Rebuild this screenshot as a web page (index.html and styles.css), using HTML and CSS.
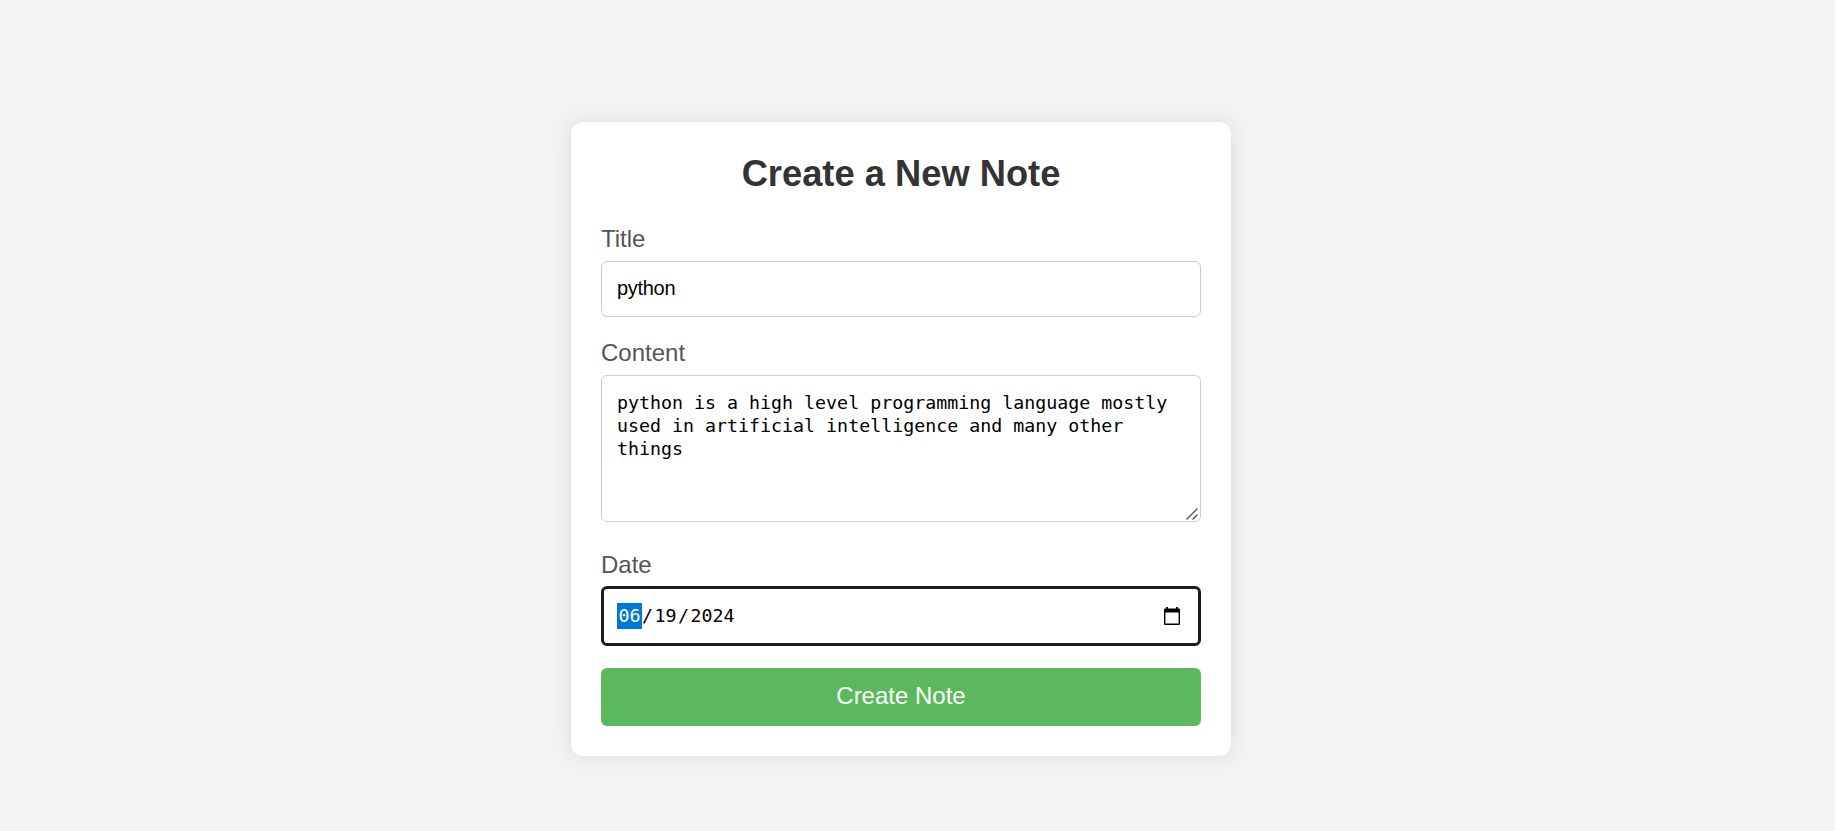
FILE: index.html
```html
<!DOCTYPE html>
<html lang="en">
<head>
<meta charset="utf-8">
<title>Create a New Note</title>
<link rel="stylesheet" href="styles.css">
</head>
<body>
<main class="page">
  <form class="card">
    <h1 class="heading">Create a New Note</h1>
    <label class="label" for="title">Title</label>
    <input class="field" id="title" type="text" value="python">
    <label class="label" for="content">Content</label>
    <div class="area">
      <textarea class="field field-area" id="content" spellcheck="false">python is a high level programming language mostly used in artificial intelligence and many other things</textarea>
      <svg class="grip" width="12" height="12" viewBox="0 0 12 12"><path d="M.5 11.5 11.5.5M6.5 11.5l5-5"/></svg>
    </div>
    <span class="label">Date</span>
    <div class="field date" tabindex="0">
      <span class="part selected">06</span><span>/</span><span class="part">19</span><span>/</span><span class="part">2024</span>
      <svg class="calendar" width="16" height="18" viewBox="0 0 16 18"><path d="M2 0h2v1.5h8V0h2v1.5h1a1 1 0 0 1 1 1V17a1 1 0 0 1-1 1H1a1 1 0 0 1-1-1V2.500a1 1 0 0 1 1-1h1zM1.400 5.500v11.100h13.200V5.500z" fill-rule="evenodd"/></svg>
    </div>
    <button class="button" type="button">Create Note</button>
  </form>
</main>
</body>
</html>
```
FILE: styles.css
```css
* {
  box-sizing: border-box;
}

body {
  margin: 0;
  background: #fff;
  font-family: "Liberation Sans", Arial, sans-serif;
}

.page {
  width: 1835px;
  height: 831px;
  padding: 122px 33px 0 0;
  display: flex;
  justify-content: center;
  align-items: flex-start;
  background: #f3f3f3;
}

.card {
  width: 660px;
  height: 634px;
  padding: 30px;
  display: flex;
  flex-direction: column;
  border-radius: 12px;
  background: #fff;
  box-shadow: 0 0 19px rgba(0, 0, 0, 0.1);
}

.heading {
  margin: 0 0 24px;
  font-size: 36.3px;
  line-height: 43px;
  text-align: center;
  color: #333;
}

.label {
  margin-bottom: 5px;
  padding-top: 3px;
  font-size: 24px;
  line-height: 34px;
  color: #555;
}

.field {
  width: 100%;
  height: 56px;
  margin: 0 0 16px;
  padding: 0 15px 1px;
  border: 1px solid #ccc;
  border-radius: 6px;
  outline: none;
  background: #fff;
  color: #000;
  font: 20px "Liberation Sans", Arial, sans-serif;
  letter-spacing: -0.3px;
}

.area {
  position: relative;
  height: 147px;
  margin-bottom: 23px;
}

.field-area {
  display: block;
  height: 147px;
  padding: 15px;
  resize: none;
  overflow: hidden;
  font: 18.3px/23px "DejaVu Sans Mono", monospace;
  letter-spacing: 0;
}

.grip {
  position: absolute;
  right: 3px;
  bottom: 2px;
  fill: none;
  stroke: #555;
  stroke-width: 1.4;
}

.date {
  height: 60px;
  margin-top: -1px;
  margin-bottom: 22px;
  display: flex;
  align-items: center;
  border: 3px solid #1c1c1c;
  padding: 0 18px 1px 13px;
  font: 18.3px/26px "DejaVu Sans Mono", monospace;
  letter-spacing: 0;
}

.part {
  padding: 0 1.5px;
}

.selected {
  background: #0078d7;
  color: #fff;
}

.calendar {
  margin-left: auto;
}

.button {
  height: 58px;
  padding: 0 0 2px;
  border: 0;
  border-radius: 6px;
  background: #5cb85c;
  color: #fff;
  font: 24px "Liberation Sans", Arial, sans-serif;
}
```
